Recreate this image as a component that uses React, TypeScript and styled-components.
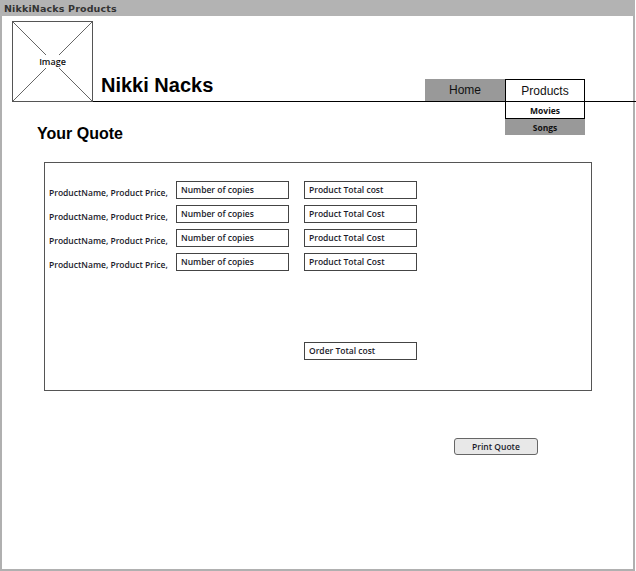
import React from "react";
import styled, { createGlobalStyle } from "styled-components";

const Global = createGlobalStyle`
  html, body { margin: 0; padding: 0; background: #fff; }
  body { font-family: "Liberation Sans", Arial, sans-serif; }
`;

const Frame = styled.div`
  box-sizing: border-box;
  width: 635px;
  height: 571px;
  border: 2px solid #b0b0b0;
  border-top: none;
  display: flex;
  flex-direction: column;
`;

const TitleBar = styled.div`
  height: 16px;
  margin: 0 -2px;
  background: #b3b3b3;
  color: #333;
  font-family: "DejaVu Sans", Verdana, sans-serif;
  font-weight: bold;
  font-size: 9.5px;
  line-height: 17px;
  padding-left: 4px;
  letter-spacing: 0.15px;
`;

const Header = styled.div`
  display: flex;
  margin-top: 5px;
  padding-left: 10px;
  margin-right: -3px;
`;

const ImageBox = styled.div`
  position: relative;
  box-sizing: border-box;
  width: 81px;
  height: 81px;
  border: 1px solid #555;
  display: flex;
  align-items: center;
  justify-content: center;
  flex-shrink: 0;
`;

const ImageCross = styled.svg`
  position: absolute;
  inset: 0;
  width: 100%;
  height: 100%;
`;

const ImageLabel = styled.span`
  position: relative;
  background: #fff;
  font-family: "Open Sans", sans-serif;
  font-weight: 600;
  font-size: 9px;
  color: #111;
  padding: 0 1px;
`;

const HeaderRight = styled.div`
  flex: 1;
  display: flex;
  align-items: flex-end;
  border-bottom: 1px solid #000;
`;

const SiteTitle = styled.h1`
  margin: 0 0 4px 8px;
  font-family: "Liberation Sans", Arial, sans-serif;
  font-weight: bold;
  font-size: 20px;
  line-height: 23px;
  color: #000;
`;

const Nav = styled.nav`
  display: flex;
  margin-left: auto;
  margin-right: 51px;
`;

const Tab = styled.div<{ $active?: boolean }>`
  position: relative;
  box-sizing: border-box;
  width: 80px;
  height: 22px;
  display: flex;
  align-items: center;
  justify-content: center;
  font-size: 12px;
  color: #111;
  background: ${(p) => (p.$active ? "#fff" : "#999")};
  border: ${(p) => (p.$active ? "1px solid #000" : "none")};
  border-bottom: none;
`;

const Dropdown = styled.div`
  position: absolute;
  top: 100%;
  left: -1px;
  width: 80px;
  margin-top: 1px;
  display: flex;
  flex-direction: column;
`;

const DropItem = styled.div<{ $active?: boolean }>`
  box-sizing: border-box;
  height: ${(p) => (p.$active ? "17px" : "16px")};
  display: flex;
  align-items: center;
  justify-content: center;
  font-family: "Open Sans", sans-serif;
  font-weight: 700;
  font-size: 8.5px;
  color: #111;
  background: ${(p) => (p.$active ? "#fff" : "#999")};
  border: ${(p) => (p.$active ? "1px solid #000" : "none")};
  border-top: none;
`;

const Main = styled.main`
  padding-left: 35px;
  display: flex;
  flex-direction: column;
`;

const Heading = styled.h2`
  margin: 22px 0 0 0;
  font-family: "Liberation Sans", Arial, sans-serif;
  font-weight: bold;
  font-size: 16px;
  line-height: 20px;
  color: #000;
`;

const QuoteBox = styled.section`
  box-sizing: border-box;
  margin: 18px 0 0 7px;
  width: 548px;
  height: 229px;
  border: 1px solid #555;
  padding: 18px 0 0 4px;
  display: flex;
  flex-direction: column;
  gap: 6px;
`;

const Row = styled.div<{ $spaced?: boolean }>`
  display: grid;
  grid-template-columns: 112px 113px 113px;
  column-gap: 15px;
  align-items: start;
  margin-top: ${(p) => (p.$spaced ? "65px" : "0")};
`;

const Label = styled.span`
  font-family: "Open Sans", sans-serif;
  font-weight: 600;
  font-size: 8.5px;
  line-height: 12px;
  color: #1a1a2a;
  padding-top: 6px;
  white-space: nowrap;
`;

const Field = styled.div`
  box-sizing: border-box;
  height: 18px;
  border: 1px solid #444;
  padding-left: 4px;
  font-family: "Open Sans", sans-serif;
  font-weight: 600;
  font-size: 8.5px;
  line-height: 15px;
  color: #1a1a2a;
  white-space: nowrap;
`;

const PrintButton = styled.button`
  box-sizing: border-box;
  margin: 47px 0 0 417px;
  width: 84px;
  height: 17px;
  border: 1px solid #666;
  border-radius: 3px;
  background: #e8e8e8;
  font-family: "Open Sans", sans-serif;
  font-weight: 600;
  font-size: 8.5px;
  color: #1a1a2a;
  padding: 0;
`;

const rows = [
  "Product Total cost",
  "Product Total Cost",
  "Product Total Cost",
  "Product Total Cost",
];

export default function App() {
  return (
    <>
      <Global />
      <Frame>
        <TitleBar>NikkiNacks Products</TitleBar>
        <Header>
          <ImageBox>
            <ImageCross viewBox="0 0 79 79" preserveAspectRatio="none">
              <line x1="0" y1="0" x2="79" y2="79" stroke="#666" strokeWidth="1" />
              <line x1="79" y1="0" x2="0" y2="79" stroke="#666" strokeWidth="1" />
            </ImageCross>
            <ImageLabel>Image</ImageLabel>
          </ImageBox>
          <HeaderRight>
            <SiteTitle>Nikki Nacks</SiteTitle>
            <Nav>
              <Tab>Home</Tab>
              <Tab $active>
                Products
                <Dropdown>
                  <DropItem $active>Movies</DropItem>
                  <DropItem>Songs</DropItem>
                </Dropdown>
              </Tab>
            </Nav>
          </HeaderRight>
        </Header>
        <Main>
          <Heading>Your Quote</Heading>
          <QuoteBox>
            {rows.map((total, i) => (
              <Row key={i}>
                <Label>ProductName, Product Price,</Label>
                <Field>Number of copies</Field>
                <Field>{total}</Field>
              </Row>
            ))}
            <Row $spaced>
              <span />
              <span />
              <Field>Order Total cost</Field>
            </Row>
          </QuoteBox>
          <PrintButton>Print Quote</PrintButton>
        </Main>
      </Frame>
    </>
  );
}
